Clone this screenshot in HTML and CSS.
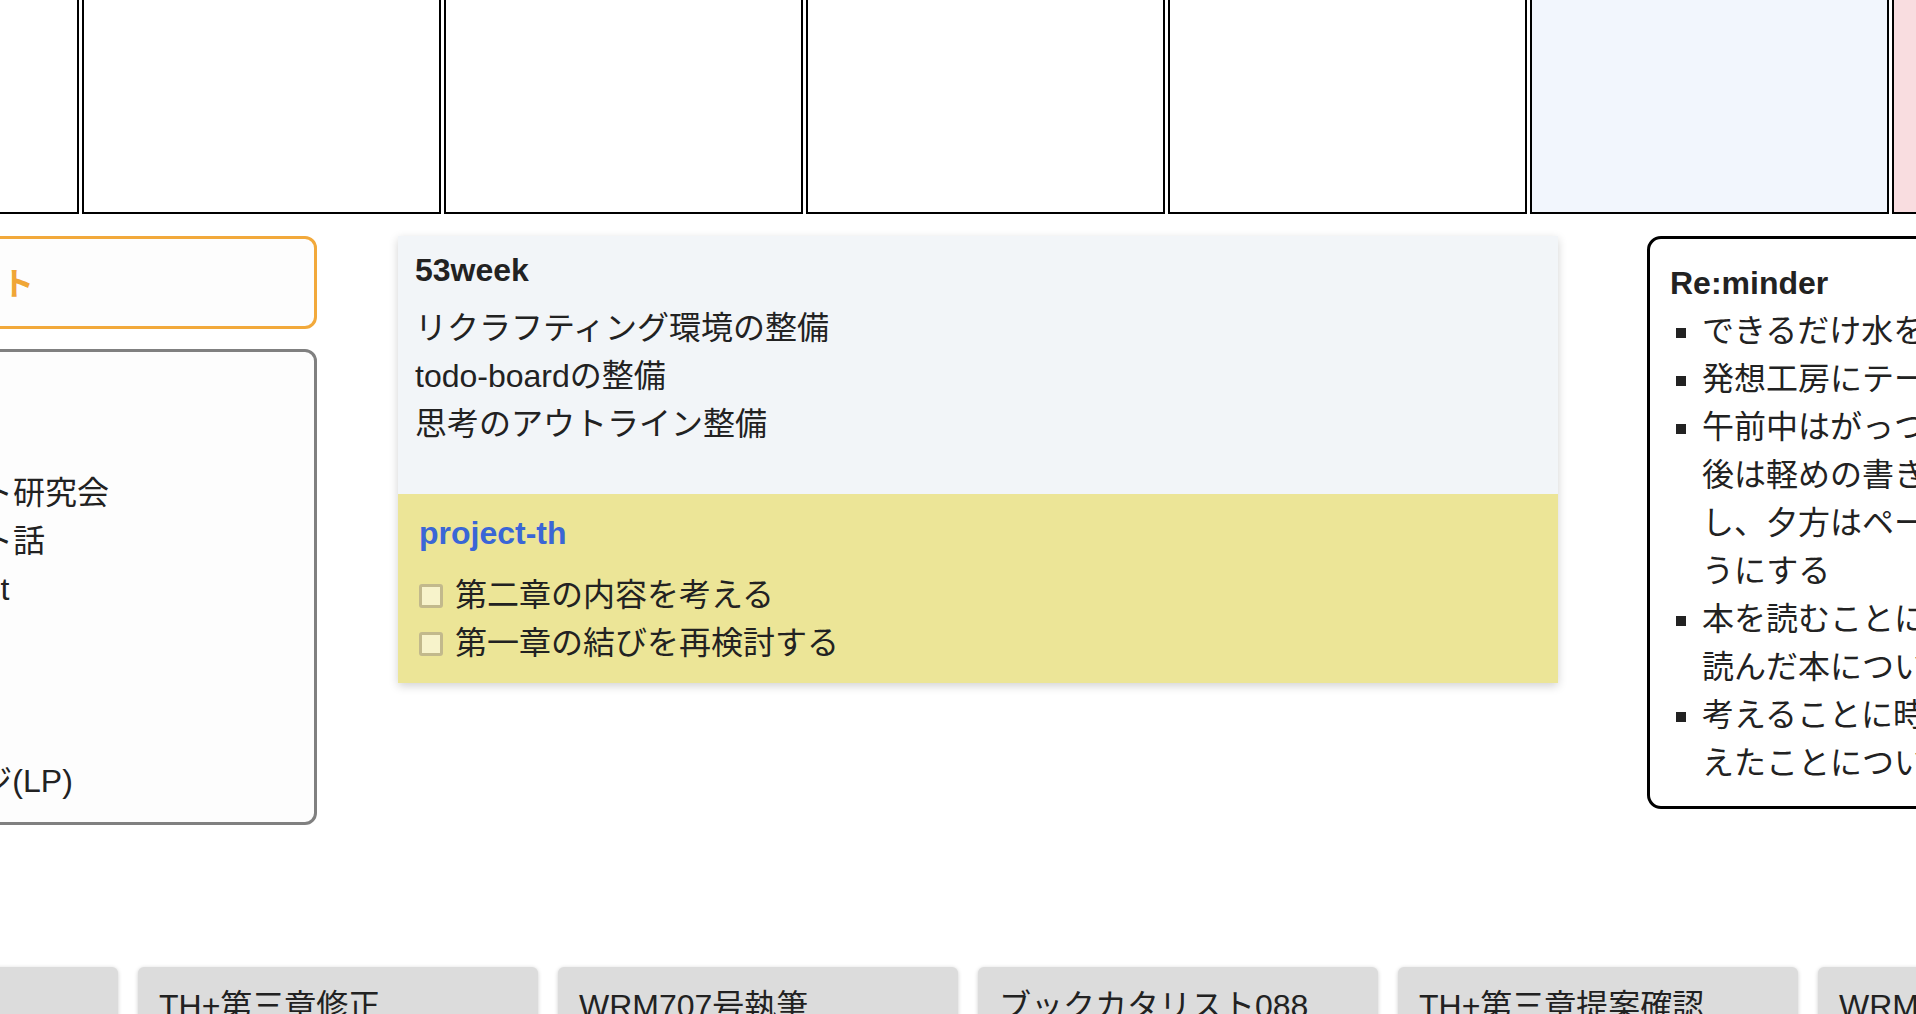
FILE: index.html
```html
<!DOCTYPE html>
<html lang="ja">
<head>
<meta charset="utf-8">
<title>todo-board</title>
<link rel="stylesheet" href="styles.css">
</head>
<body>
<div class="board">
	<div class="week">
		<div class="day"></div>
		<div class="day"></div>
		<div class="day"></div>
		<div class="day"></div>
		<div class="day"></div>
		<div class="day sat"></div>
		<div class="day sun"></div>
	</div>

	<div class="main">
		<div class="side">
			<div class="box focus">
				<h2>注力プロジェクト</h2>
			</div>
			<div class="box">
				<ul>
					<li>原稿執筆</li>
					<li>メール返信</li>
					<li>知的アウトプット研究会</li>
					<li>ブックカタリスト話</li>
					<li>メルマガ用のpost</li>
					<li>資料整理</li>
					<li>講座の準備</li>
					<li>読書メモ</li>
					<li>新刊の紹介ページ(LP)</li>
				</ul>
			</div>
		</div>

		<div class="card">
			<div class="card-week">
				<h3>53week</h3>
				<ul>
					<li>リクラフティング環境の整備</li>
					<li>todo-boardの整備</li>
					<li>思考のアウトライン整備</li>
				</ul>
			</div>
			<div class="card-project">
				<h3><a href="#">project-th</a></h3>
				<ul class="todo">
					<li><input type="checkbox">第二章の内容を考える</li>
					<li><input type="checkbox">第一章の結びを再検討する</li>
				</ul>
			</div>
		</div>

		<div class="reminder">
			<h3>Re:minder</h3>
			<ul>
				<li>できるだけ水を飲むようにする</li>
				<li>発想工房にテーマを書き出す</li>
				<li>午前中はがっつり原稿を書いて、午後は軽めの書き物と事務作業中心にし、夕方はページを静かにめくるようにする</li>
				<li>本を読むことにしっかり時間を使い読んだ本について書く</li>
				<li>考えることに時間を割いて、よく考えたことについて書く</li>
			</ul>
		</div>
	</div>

	<div class="tasks">
		<div class="task">書評執筆</div>
		<div class="task">TH+第三章修正</div>
		<div class="task">WRM707号執筆</div>
		<div class="task">ブックカタリスト088</div>
		<div class="task">TH+第三章提案確認</div>
		<div class="task">WRM708号準備</div>
	</div>
</div>
</body>
</html>
```

FILE: styles.css
```css
*{ margin:0; padding:0; box-sizing:border-box;}
html, body{ overflow:hidden;}
body{ font-family:"Liberation Sans","Noto Sans CJK JP",sans-serif; font-size:32px; line-height:48px; color:#222; background:#fff;}
li{ list-style:none;}
h2, h3{ font-size:32px; font-weight:bold;}

.board{ width:2531px; margin:-120px 0 0 -280px;}

/* week strip */
.week{ display:flex; gap:3px; height:334px;}
.day{ flex:none; width:359px; border:2px solid #000; background:#fff;}
.day.sat{ background:#f2f6fd;}
.day.sun{ background:#f9dde0;}

/* middle row */
.main{ display:flex; align-items:flex-start; margin-top:22px; padding-left:14px;}

.side{ flex:none; width:583px; display:flex; flex-direction:column; gap:20px;}
.box{ border:3px solid #808080; border-radius:12px; background:#fdfdfd; padding:21px 20px 17px;}
.box li{ white-space:nowrap;}
.box.focus{ border-color:#f2a93b; padding:21px 20px 18px 41px;}
.focus h2{ color:#f0a637; white-space:nowrap;}

.card{ flex:none; width:1160px; margin-left:81px; box-shadow:0 3px 9px rgba(0,0,0,.18);}
.card-week{ background:#f2f5f8; padding:10px 17px 46px;}
.card-week h3{ margin-bottom:10px;}
.card-project{ background:#ece597; padding:15px 21px 16px;}
.card-project h3{ margin-bottom:14px;}
.card-project h3 a{ color:#3a66d6; text-decoration:none;}
.todo input{ -webkit-appearance:none; appearance:none; width:24px; height:24px; border:3px solid #c2b98c; background:#f7f3cb; border-radius:3px; vertical-align:middle; margin:-4px 12px 0 0;}

.reminder{ flex:none; width:604px; margin-left:89px; border:3px solid #000; border-radius:14px; background:#fff; padding:20px 20px 19px;}
.reminder ul{ padding-left:32px;}
.reminder li{ list-style:square;}

/* bottom task cards */
.tasks{ display:flex; gap:20px; margin:142px 0 0 -2px;}
.task{ flex:none; width:400px; height:120px; background:#dcdcdc; border-radius:6px; box-shadow:0 1px 4px rgba(0,0,0,.2); padding:15px 21px; white-space:nowrap;}
```
